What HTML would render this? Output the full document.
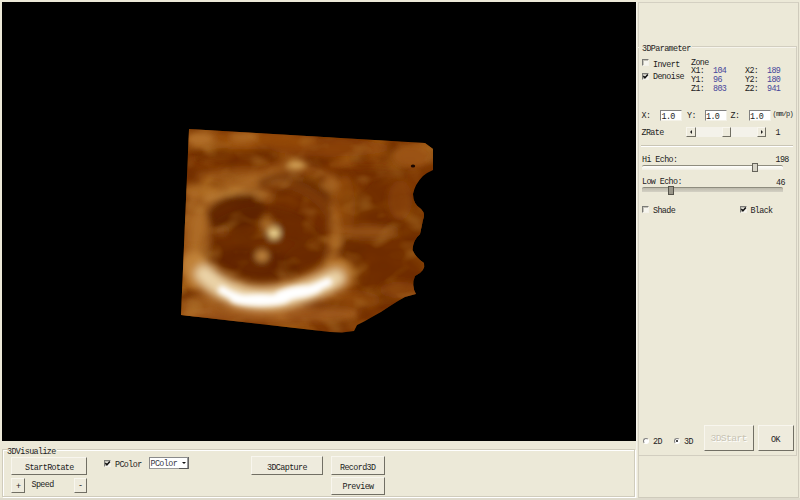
<!DOCTYPE html>
<html><head><meta charset="utf-8">
<style>
html,body{margin:0;padding:0;}
body{width:800px;height:500px;overflow:hidden;background:#ECE9D8;position:relative;font-family:"Liberation Mono",monospace;font-size:8.4px;color:#1c1c1c;}
.a{position:absolute;}
.t{position:absolute;white-space:nowrap;line-height:1;letter-spacing:-0.6px;}
.view{left:2px;top:2px;width:633.5px;height:438.6px;background:#000;}
.etch{position:absolute;border:1px solid #D0CCBC;box-shadow:1px 1px 0 #fff inset, 1px 1px 0 #fff;}
.btn{position:absolute;background:#EEEBDD;border-top:1px solid #F8F6EE;border-left:1px solid #F8F6EE;border-right:1px solid #716F64;border-bottom:1px solid #716F64;box-sizing:border-box;}
.chk{position:absolute;width:7px;height:7px;background:#F6F5EE;border-top:1px solid #7a7a76;border-left:1px solid #7a7a76;border-right:1px solid #f4f2ea;border-bottom:1px solid #f4f2ea;box-sizing:border-box;box-shadow:inset 1px 1px 0 #C4C2B8;}
.edit{position:absolute;background:#fff;border-top:1px solid #808080;border-left:1px solid #808080;border-right:1px solid #f4f2e8;border-bottom:1px solid #f4f2e8;box-sizing:border-box;}
.blue{color:#45459a;}
.rad{position:absolute;width:6px;height:6px;border-radius:50%;background:#fff;border-top:1px solid #808080;border-left:1px solid #808080;border-right:1px solid #fff;border-bottom:1px solid #fff;box-sizing:border-box;}
</style></head>
<body>
<!-- black viewport -->
<div class="a view"></div>
<!--VOL-->
<svg class="a" style="left:0;top:0" width="800" height="500" viewBox="0 0 800 500">
<defs><clipPath id="vc"><path d="M189,129 L425,143 L433,149 L433,170 Q428,172 423,176 Q415,184 413,194 Q413,204 421,209 Q426,214 423,220 L420,234 Q413,240 412.5,250 Q416,258 424,263 Q426,271 415,276 Q411,285 416,294 L405,297 L398,301 L390,306 L381,312 L372,317 L365,321 L357,325 L354,331 L342,332.5 L330,332 L181,315 Z"/></clipPath>
<filter id="bl" filterUnits="userSpaceOnUse" x="150" y="100" width="310" height="260"><feGaussianBlur stdDeviation="3.2"/></filter>
<filter id="ba" filterUnits="userSpaceOnUse" x="150" y="100" width="310" height="260"><feGaussianBlur stdDeviation="4.5"/></filter>
<filter id="bc" filterUnits="userSpaceOnUse" x="150" y="100" width="310" height="260"><feGaussianBlur stdDeviation="2.8"/></filter>
<filter id="tb" x="0" y="0" width="100%" height="100%" color-interpolation-filters="sRGB"><feTurbulence type="fractalNoise" baseFrequency="0.03 0.05" numOctaves="2" seed="7"/><feGaussianBlur stdDeviation="1.5"/><feColorMatrix type="matrix" values="0 0 0 0 0.68  0 0 0 0 0.45  0 0 0 0 0.14  0 0 0 3.2 -1.45"/></filter>
<filter id="td" x="0" y="0" width="100%" height="100%" color-interpolation-filters="sRGB"><feTurbulence type="fractalNoise" baseFrequency="0.03 0.05" numOctaves="2" seed="21"/><feGaussianBlur stdDeviation="1.5"/><feColorMatrix type="matrix" values="0 0 0 0 0.38  0 0 0 0 0.16  0 0 0 0 0.01  0 0 0 3.0 -1.3"/></filter>
<filter id="tb2" x="0" y="0" width="100%" height="100%" color-interpolation-filters="sRGB"><feTurbulence type="fractalNoise" baseFrequency="0.04 0.06" numOctaves="2" seed="3"/><feGaussianBlur stdDeviation="1.2"/><feColorMatrix type="matrix" values="0 0 0 0 0.72  0 0 0 0 0.54  0 0 0 0 0.24  0 0 0 2.6 -1.35"/></filter>
<filter id="eb" x="-5%" y="-5%" width="110%" height="110%" color-interpolation-filters="sRGB"><feGaussianBlur stdDeviation="0.6"/><feColorMatrix type="matrix" values="1 0 0 0 0  -0.06 1 0.06 0 0  -0.1 0.1 1 0 0  0 0 0 1 0"/></filter></defs>
<g filter="url(#eb)"><g clip-path="url(#vc)"><rect x="170" y="120" width="270" height="220" fill="#7e3e08"/>
<rect x="170" y="120" width="270" height="220" filter="url(#tb)" opacity="0.7"/>
<rect x="170" y="120" width="270" height="220" filter="url(#td)" opacity="0.6"/>
<g filter="url(#bl)">
<ellipse cx="250" cy="140" rx="70" ry="9" fill="#9e5a14" opacity="0.7" transform="rotate(0 250 140)"/>
<ellipse cx="200" cy="139" rx="14" ry="8" fill="#b47a30" opacity="0.9" transform="rotate(0 200 139)"/>
<ellipse cx="243" cy="137" rx="14" ry="6" fill="#b47a30" opacity="0.7" transform="rotate(0 243 137)"/>
<ellipse cx="330" cy="148" rx="60" ry="9" fill="#92500e" opacity="0.6" transform="rotate(0 330 148)"/>
<ellipse cx="412" cy="156" rx="20" ry="12" fill="#a86a22" opacity="0.7" transform="rotate(0 412 156)"/>
<ellipse cx="235" cy="157" rx="40" ry="7" fill="#6a2e04" opacity="0.6" transform="rotate(0 235 157)"/>
<ellipse cx="370" cy="175" rx="35" ry="8" fill="#6a2e04" opacity="0.5" transform="rotate(0 370 175)"/>
<ellipse cx="250" cy="176" rx="55" ry="7" fill="#a86c24" opacity="0.6" transform="rotate(0 250 176)"/>
<ellipse cx="330" cy="186" rx="9" ry="8" fill="#b47a30" opacity="0.6" transform="rotate(0 330 186)"/>
<ellipse cx="194" cy="240" rx="12" ry="50" fill="#a86c26" opacity="0.8" transform="rotate(0 194 240)"/>
<ellipse cx="198" cy="191" rx="16" ry="8" fill="#b47a30" opacity="0.7" transform="rotate(0 198 191)"/>
<ellipse cx="266" cy="236" rx="70" ry="56" fill="none" stroke="#c08a3c" stroke-width="12" opacity="0.42"/>
<ellipse cx="262" cy="248" rx="62" ry="42" fill="#6a2e04" opacity="0.7" transform="rotate(0 262 248)"/>
<ellipse cx="236" cy="212" rx="30" ry="17" fill="#5c2804" opacity="0.75" transform="rotate(-12 236 212)"/>
<ellipse cx="300" cy="212" rx="32" ry="30" fill="#6a2e04" opacity="0.6" transform="rotate(0 300 212)"/>
<path d="M262 182 Q295 168 328 196" stroke="#5c2804" stroke-width="8" fill="none" stroke-linecap="round" opacity="0.55"/>
<ellipse cx="250" cy="268" rx="48" ry="20" fill="#5c2804" opacity="0.65" transform="rotate(0 250 268)"/>
<ellipse cx="305" cy="262" rx="22" ry="18" fill="#6a2e04" opacity="0.55" transform="rotate(0 305 262)"/>
<path d="M206 200 Q232 188 262 192" stroke="#c8964a" stroke-width="5" fill="none" stroke-linecap="round" opacity="0.7"/>
<path d="M268 170 Q300 158 335 180" stroke="#b47a30" stroke-width="5" fill="none" stroke-linecap="round" opacity="0.6"/>
<ellipse cx="296" cy="165" rx="10" ry="5" fill="#d8b060" opacity="0.9" transform="rotate(0 296 165)"/>
<ellipse cx="205" cy="235" rx="6" ry="20" fill="#b47a30" opacity="0.6" transform="rotate(0 205 235)"/>
<ellipse cx="265" cy="195" rx="8" ry="6" fill="#b47a30" opacity="0.6" transform="rotate(0 265 195)"/>
<path d="M333 200 Q342 230 332 262" stroke="#b47a30" stroke-width="5" fill="none" stroke-linecap="round" opacity="0.45"/>
<ellipse cx="267" cy="224" rx="6" ry="9" fill="#a87028" opacity="0.8" transform="rotate(0 267 224)"/>
<ellipse cx="274" cy="233" rx="6" ry="6" fill="#ecd890" opacity="1" transform="rotate(0 274 233)"/>
<ellipse cx="262" cy="256" rx="7" ry="6" fill="#c8964a" opacity="0.85" transform="rotate(0 262 256)"/>
<ellipse cx="221" cy="231" rx="7" ry="4" fill="#9a6224" opacity="0.7" transform="rotate(0 221 231)"/>
<ellipse cx="385" cy="240" rx="45" ry="60" fill="#6a2e04" opacity="0.55" transform="rotate(0 385 240)"/>
<ellipse cx="368" cy="232" rx="30" ry="6" fill="#b47a30" opacity="0.5" transform="rotate(0 368 232)"/>
<ellipse cx="335" cy="242" rx="8" ry="6" fill="#b47a30" opacity="0.6" transform="rotate(0 335 242)"/>
<ellipse cx="400" cy="290" rx="20" ry="8" fill="#945418" opacity="0.5" transform="rotate(0 400 290)"/>
<ellipse cx="350" cy="300" rx="30" ry="10" fill="#9a5a18" opacity="0.5" transform="rotate(0 350 300)"/>
<ellipse cx="345" cy="205" rx="10" ry="30" fill="#a8681c" opacity="0.45" transform="rotate(0 345 205)"/>
<ellipse cx="400" cy="200" rx="12" ry="20" fill="#a0601a" opacity="0.4" transform="rotate(0 400 200)"/>
<ellipse cx="270" cy="314" rx="90" ry="9" fill="#a8682a" opacity="0.7" transform="rotate(0 270 314)"/>
<ellipse cx="200" cy="305" rx="18" ry="10" fill="#a86c2a" opacity="0.7" transform="rotate(0 200 305)"/>
</g>
<rect x="170" y="120" width="270" height="220" filter="url(#tb2)" opacity="0.4"/>
<g filter="url(#ba)"><path d="M194 266 Q248 326 340 274" stroke="#c89446" stroke-width="30" fill="none" stroke-linecap="round" opacity="0.8"/><path d="M204 274 Q252 322 336 278" stroke="#eedcb0" stroke-width="18" fill="none" stroke-linecap="round" opacity="0.95"/></g>
<g filter="url(#bc)"><path d="M222 290 Q258 314 328 282" stroke="#ffffff" stroke-width="8" fill="none" stroke-linecap="round" opacity="1"/><ellipse cx="260" cy="300" rx="30" ry="6" fill="#ffffff" opacity="1" transform="rotate(0 260 300)"/><ellipse cx="298" cy="292" rx="24" ry="6" fill="#ffffff" opacity="1" transform="rotate(-8 298 292)"/></g>
</g><ellipse cx="413" cy="166" rx="2.2" ry="1.6" fill="#1a0800"/></g></svg>
<!--/VOL-->

<!-- right panel -->
<div class="a" style="left:636px;top:2px;width:1px;height:496px;background:#F4F2EA;"></div>
<div class="a" style="left:637.5px;top:2px;width:161px;height:496px;border-top:1px solid #D4D0C2;border-left:1px solid #D4D0C2;border-right:1px solid #CFCBBC;border-bottom:1px solid #CFCBBC;box-sizing:border-box;"></div>
<!-- 3DParameter groupbox -->
<div class="a" style="left:638px;top:46px;width:159px;height:410px;border-top:1px solid #D2CEC0;border-right:1px solid #D2CEC0;border-bottom:1px solid #D2CEC0;box-sizing:border-box;box-shadow:inset 0 1px 0 #F6F4EC;"></div>
<div class="t" style="left:639px;top:45px;background:#ECE9D8;padding:0 1px 0 3px;">3DParameter</div>

<div class="chk" style="left:642px;top:59px;"></div>
<div class="t" style="left:653px;top:61px;">Invert</div>
<div class="chk" style="left:642px;top:73px;"></div>
<svg class="a" style="left:642px;top:73px;" width="7" height="7" viewBox="0 0 7 7"><path d="M1.4 3 L2.9 4.7 L5.9 1.5" stroke="#111" stroke-width="1.6" fill="none"/></svg>
<div class="t" style="left:653px;top:73px;">Denoise</div>

<div class="t" style="left:691px;top:59px;">Zone</div>
<div class="t" style="left:691px;top:67px;">X1:</div><div class="t blue" style="left:713px;top:67px;">104</div>
<div class="t" style="left:745px;top:67px;">X2:</div><div class="t blue" style="left:767px;top:67px;">189</div>
<div class="t" style="left:691px;top:76px;">Y1:</div><div class="t blue" style="left:713px;top:76px;">96</div>
<div class="t" style="left:745px;top:76px;">Y2:</div><div class="t blue" style="left:767px;top:76px;">180</div>
<div class="t" style="left:691px;top:84.5px;">Z1:</div><div class="t blue" style="left:713px;top:84.5px;">803</div>
<div class="t" style="left:745px;top:84.5px;">Z2:</div><div class="t blue" style="left:767px;top:84.5px;">941</div>

<div class="t" style="left:641.5px;top:111.5px;">X:</div>
<div class="edit" style="left:660px;top:109.5px;width:22px;height:11px;"></div>
<div class="t" style="left:661.5px;top:112.5px;">1.0</div>
<div class="t" style="left:687px;top:111.5px;">Y:</div>
<div class="edit" style="left:704.5px;top:109.5px;width:22px;height:11px;"></div>
<div class="t" style="left:706px;top:112.5px;">1.0</div>
<div class="t" style="left:730.6px;top:111.5px;">Z:</div>
<div class="edit" style="left:748.75px;top:109.5px;width:22.5px;height:11px;"></div>
<div class="t" style="left:750px;top:112.5px;">1.0</div>
<div class="t" style="left:772.5px;top:111px;font-size:7px;letter-spacing:-0.8px;">(mm/p)</div>

<div class="t" style="left:641.5px;top:129px;">ZRate</div>
<div class="a" style="left:686px;top:127px;width:80px;height:9.5px;background:#F4F2EA;"></div>
<div class="btn" style="left:686px;top:127px;width:10px;height:9.5px;"></div>
<div class="a" style="left:689.5px;top:129.5px;width:0;height:0;border-top:2.5px solid transparent;border-bottom:2.5px solid transparent;border-right:2.5px solid #222;"></div>
<div class="btn" style="left:757px;top:127px;width:9px;height:9.5px;"></div>
<div class="a" style="left:760.5px;top:129.5px;width:0;height:0;border-top:2.5px solid transparent;border-bottom:2.5px solid transparent;border-left:2.5px solid #222;"></div>
<div class="btn" style="left:722px;top:127px;width:9px;height:9.5px;"></div>
<div class="t" style="left:775.6px;top:129px;">1</div>

<div class="a" style="left:641px;top:145px;width:152px;height:1px;background:#C9C5B5;border-bottom:1px solid #fff;"></div>

<div class="t" style="left:642px;top:156px;">Hi Echo:</div>
<div class="t" style="left:775.5px;top:156px;">198</div>
<div class="a" style="left:642px;top:165px;width:141px;height:5px;background:linear-gradient(#FFFFFC,#F0EEE4);border-top:1px solid #8E8C7E;box-sizing:border-box;border-radius:2px 2px 0 0;"></div>
<div class="a" style="left:752px;top:162.5px;width:5.5px;height:9.5px;background:#D6D3C6;border:1px solid #65635a;box-sizing:border-box;"></div>

<div class="t" style="left:642px;top:178px;">Low Echo:</div>
<div class="t" style="left:776px;top:178.5px;">46</div>
<div class="a" style="left:642px;top:187px;width:141px;height:4.5px;background:linear-gradient(#BDBAAC,#D4D1C4);border-top:1px solid #8E8C7E;box-sizing:border-box;border-radius:2px 2px 0 0;"></div>
<div class="a" style="left:668px;top:185.5px;width:5.5px;height:9px;background:#9A978A;border:1px solid #55534a;box-sizing:border-box;"></div>

<div class="chk" style="left:642px;top:206px;"></div>
<div class="t" style="left:653px;top:207.2px;">Shade</div>
<div class="chk" style="left:740px;top:205.5px;"></div>
<svg class="a" style="left:740px;top:205.5px;" width="7" height="7" viewBox="0 0 7 7"><path d="M1.4 3 L2.9 4.7 L5.9 1.5" stroke="#111" stroke-width="1.6" fill="none"/></svg>
<div class="t" style="left:750.4px;top:207px;">Black</div>

<div class="rad" style="left:642.5px;top:437.5px;"></div>
<div class="t" style="left:653px;top:438px;">2D</div>
<div class="rad" style="left:674px;top:437.5px;"></div>
<div class="a" style="left:676px;top:439.5px;width:2px;height:2px;background:#111;border-radius:50%;"></div>
<div class="t" style="left:684px;top:438px;">3D</div>

<div class="btn" style="left:704px;top:425px;width:50px;height:26px;"></div>
<div class="t" style="left:710.5px;top:434px;font-size:9.8px;letter-spacing:-0.7px;color:#C8C4B4;text-shadow:1px 1px 0 #fff;">3DStart</div>
<div class="btn" style="left:758px;top:425px;width:36px;height:26px;"></div>
<div class="t" style="left:771px;top:435.5px;">OK</div>

<!-- bottom groupbox -->
<div class="etch" style="left:2px;top:449px;width:631px;height:46px;"></div>
<div class="a" style="left:0;top:498px;width:800px;height:2px;background:#DEDACC;"></div>
<div class="t" style="left:7px;top:448px;background:#ECE9D8;padding:0 1px 0 0;">3DVisualize</div>

<div class="btn" style="left:11px;top:457px;width:76px;height:18px;"></div>
<div class="t" style="left:25px;top:464px;">StartRotate</div>
<div class="btn" style="left:11px;top:478px;width:14px;height:15px;"></div>
<div class="t" style="left:16px;top:482.5px;">+</div>
<div class="t" style="left:31.5px;top:481px;">Speed</div>
<div class="btn" style="left:74px;top:478px;width:13px;height:15px;"></div>
<div class="t" style="left:78px;top:482px;">-</div>

<div class="chk" style="left:104px;top:460px;"></div>
<svg class="a" style="left:104px;top:460px;" width="7" height="7" viewBox="0 0 7 7"><path d="M1.4 3 L2.9 4.7 L5.9 1.5" stroke="#111" stroke-width="1.6" fill="none"/></svg>
<div class="t" style="left:115px;top:461px;">PColor</div>
<div class="edit" style="left:149px;top:457px;width:39px;height:12px;border-top:1px solid #8a8a8a;border-left:1px solid #8a8a8a;border-right:1px solid #9a9a9a;border-bottom:1px solid #9a9a9a;"></div>
<div class="t" style="left:150.5px;top:460px;color:#3a3a48;">PColor</div>
<div class="a" style="left:179px;top:467.5px;width:9px;height:1px;background:#555;"></div><div class="a" style="left:187.5px;top:457px;width:1px;height:11.5px;background:#666;"></div>
<div class="a" style="left:181.5px;top:462px;width:0;height:0;border-left:2.2px solid transparent;border-right:2.2px solid transparent;border-top:2.5px solid #111;"></div>

<div class="btn" style="left:251px;top:456px;width:72px;height:19px;"></div>
<div class="t" style="left:267px;top:463.5px;">3DCapture</div>
<div class="btn" style="left:331px;top:456px;width:54px;height:19px;"></div>
<div class="t" style="left:340px;top:463.5px;">Record3D</div>
<div class="btn" style="left:331px;top:477px;width:54px;height:18px;"></div>
<div class="t" style="left:342.5px;top:483px;">Preview</div>

</body></html>
